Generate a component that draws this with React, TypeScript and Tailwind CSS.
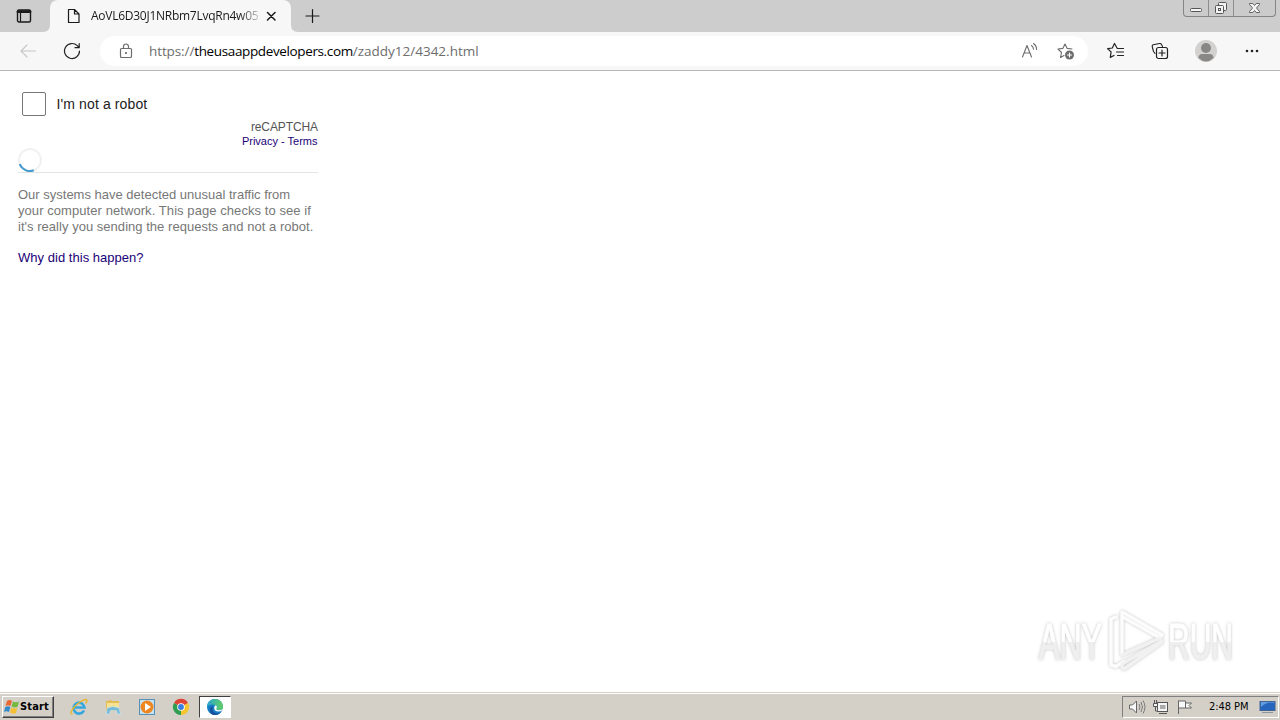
import type { ReactNode } from "react";

const Icon = ({ size = 20, className = "", children }: { size?: number; className?: string; children: ReactNode }) => (
  <svg
    width={size}
    height={size}
    viewBox={`0 0 ${size} ${size}`}
    fill="none"
    stroke="currentColor"
    strokeWidth="1.2"
    strokeLinecap="round"
    strokeLinejoin="round"
    className={`block shrink-0 ${className}`}
  >
    {children}
  </svg>
);

const WindowControls = () => (
  <div className="absolute right-[4px] top-0 flex h-[17px] w-[93px] rounded-b-[4px] border border-t-0 border-[#858585] bg-[#cbcbcb] text-[#555]">
    <div className="w-[25px] border-r border-[#8d8d8d]">
      <svg width="24" height="16" className="block">
        <rect x="6.5" y="8.5" width="11" height="3" rx="1" fill="#f5f5f5" stroke="currentColor" />
      </svg>
    </div>
    <div className="w-[25px] border-r border-[#8d8d8d]">
      <svg width="24" height="16" className="block" fill="#f2f2f2" stroke="currentColor">
        <rect x="9.5" y="2.5" width="8" height="8" rx="1" />
        <rect x="6.5" y="5.5" width="8" height="8" rx="1" />
        <rect x="9.5" y="8.5" width="2" height="2" />
      </svg>
    </div>
    <div className="flex-1">
      <svg width="41" height="16" className="block" fill="#f2f2f2" stroke="currentColor" strokeWidth="0.9">
        <path d="M15.5 3.5h3.3l1.7 2 1.7-2h3.3v1l-3 3.5 3 3.5v1h-3.3l-1.7-2-1.7 2h-3.3v-1l3-3.5-3-3.5z" />
      </svg>
    </div>
  </div>
);

const TabStrip = () => (
  <div className="relative flex h-8 bg-[#cdcdcd] text-[#1a1a1a]">
    <div className="flex w-[50px] items-center pl-[16px]">
      <Icon size={16}>
        <rect x="1.5" y="2" width="13" height="12" rx="1.5" strokeWidth="1.4" />
        <path d="M2 3.7h12" strokeWidth="2.8" />
        <path d="M4.5 5v8.5" />
      </Icon>
    </div>
    <div className="relative flex w-[241px] items-center rounded-t-[8px] bg-[#f7f7f7] pl-[16px]">
      <svg width="7" height="7" className="absolute -left-[7px] bottom-0">
        <path d="M7 0v7H0Q7 7 7 0" fill="#f7f7f7" />
      </svg>
      <svg width="7" height="7" className="absolute -right-[7px] bottom-0">
        <path d="M0 0v7h7Q0 7 0 0" fill="#f7f7f7" />
      </svg>
      <Icon size={16}>
        <path d="M2.5 1.5h6l4.5 4.5v8.5h-10.500zM8.5 1.5v4.5h4.5" />
      </Icon>
      <div className="ml-[9px] w-[168px] whitespace-nowrap bg-gradient-to-r from-[#1a1a1a] from-88% to-[#d0d0d0] bg-clip-text font-['Open_Sans',sans-serif] text-[12px] leading-4 tracking-[-0.26px] text-transparent">
        AoVL6D30J1NRbm7LvqRn4w05
      </div>
      <Icon size={10} className="ml-[7px]">
        <path d="M1.5 1.5l7.5 7.5M9 1.5L1.5 9" strokeWidth="1.5" />
      </Icon>
    </div>
    <div className="flex items-center pl-[13px]">
      <Icon size={16}>
        <path d="M8.5 1.5v13M2 8h13" />
      </Icon>
    </div>
    <WindowControls />
  </div>
);

const Toolbar = () => (
  <div className="flex h-[39px] items-center border-b border-[#b6b6b6] bg-[#f7f7f7] text-[#222]">
    <Icon size={18} className="ml-[19px] text-[#c6c6c6]">
      <path d="M16.5 9H2M8 3L2 9l6 6" strokeWidth="1.1" />
    </Icon>
    <Icon size={18} className="ml-[26px]">
      <path d="M16.5 9a7.5 7.5 0 1 1-2.2-5.3L16 5.5M16.2 1.5v4.2h-4.2" />
    </Icon>
    <div className="ml-[19px] flex h-[30px] w-[988px] items-center rounded-full bg-white pl-[18px] text-[#6d6d6d]">
      <Icon size={16}>
        <rect x="2.5" y="5.5" width="11" height="9" rx="1" />
        <path d="M5.5 5.5V3.5a2.5 2.5 0 0 1 5 0v2" />
        <circle cx="8" cy="10" r=".5" fill="currentColor" />
      </Icon>
      <div className="ml-[15px] w-[872px] whitespace-nowrap font-['Open_Sans',sans-serif] text-[13.5px] leading-5 tracking-[-0.1px]">
        https://
        <span className="tracking-[-0.37px] text-black">theusaappdevelopers.com</span>
        <span className="tracking-[0px]">/zaddy12/4342.html</span>
      </div>
      <Icon size={18}>
        <path d="M1.5 15L6 3.5 10.5 15M3.2 11h5.8M10.5 3.5q2 1.5 2 3.8M12.5 1.5q3.2 2.3 3 6" strokeWidth="1.1" />
      </Icon>
      <Icon size={19} className="ml-[18px]">
        <path d="M7 13.5L3.5 15.5l1-5L1 7l4.800-.6L8 2l2.200 4.400L15 7" strokeWidth="1.1" />
        <circle cx="12.5" cy="13" r="4.5" fill="currentColor" stroke="none" />
        <path d="M10.5 13h4M12.5 11v4" stroke="white" strokeWidth="1.1" />
      </Icon>
    </div>
    <Icon size={18} className="ml-[19px]">
      <path d="M10 6L7.5 1.5 5.3 6l-4.600.7 3.400 3.200-.8 5.500L7 13.5M10.5 6.5h6M9.5 10h7M10.5 13.5h6" />
    </Icon>
    <Icon size={18} className="ml-[26px]">
      <path d="M4 11.5L2.5 9.5 1.2 4.5Q1 3.2 2.2 2.8L8.5 1.5q1.5-.3 2 1l1 2" strokeWidth="1.1" />
      <rect x="5.5" y="5.5" width="11" height="11" rx="2" />
      <path d="M8 11h6M11 8v6" />
    </Icon>
    <svg width="22" height="22" viewBox="0 0 22 22" className="ml-[26px] block">
      <circle cx="11" cy="11" r="11" fill="#d3d1cf" />
      <circle cx="11" cy="8" r="5" fill="#898785" />
      <path d="M3.5 18q0-4 4-4h7q4 0 4 4-7.500 7-15 0" fill="#898785" />
    </svg>
    <svg width="16" height="16" className="ml-[27px] block" fill="#222">
      <circle cx="3" cy="8" r="1.3" />
      <circle cx="8" cy="8" r="1.3" />
      <circle cx="13" cy="8" r="1.3" />
    </svg>
  </div>
);

const Captcha = () => (
  <main className="flex-1 bg-white pl-[18px] pt-[21px] font-['Liberation_Sans',Arial,sans-serif]">
    <div className="w-[300px]">
      <div className="flex h-6 items-center pl-[4px]">
        <div className="h-6 w-6 rounded-[2px] border border-[#777]" />
        <span className="ml-[10.5px] whitespace-nowrap text-[14px] tracking-[0.12px] text-[#222]">I'm not a robot</span>
      </div>
      <div className="mt-[4px] text-right text-[12px] leading-[14px] tracking-[-0.1px] text-[#555]">reCAPTCHA</div>
      <div className="pr-[0.5px] text-right text-[11px] leading-[14px] text-[#1a0078]">Privacy - Terms</div>
      <div className="h-[25px] border-b border-[#e4e4e4]">
        <svg width="24" height="24" className="block" fill="none" strokeWidth="2">
          <circle cx="12" cy="12" r="11" stroke="#f1f1f1" />
          <path d="M1.7 16.2A11 11 0 0 0 15.8 22.3" stroke="#459bd0" />
        </svg>
      </div>
      <p className="mt-[14px] whitespace-nowrap text-[13px] leading-4 tracking-[0.03px] text-[#777]">
        <span className="tracking-[0px]">Our systems have detected unusual traffic from</span>
        <br />
        <span className="tracking-[0.07px]">your computer network. This page checks to see if</span>
        <br />
        it's really you sending the requests and not a robot.
      </p>
      <div className="mt-[15px] text-[13px] leading-4 tracking-[0.03px] text-[#1a0078]">Why did this happen?</div>
    </div>
  </main>
);

const Watermark = () => (
  <svg width="220" height="80" viewBox="1030 600 220 80" className="absolute bottom-[40px] left-[1030px] overflow-visible">
    <defs>
      <filter id="soft" x="-10%" y="-15%" width="120%" height="130%">
        <feDropShadow dx="0" dy="0" stdDeviation="1.8" floodColor="#888" floodOpacity="0.55" />
      </filter>
      <linearGradient id="fade" x1="0" y1="622" x2="0" y2="661" gradientUnits="userSpaceOnUse">
        <stop offset="0.5" stopColor="#ffffff" />
        <stop offset="0.5" stopColor="#efefef" />
      </linearGradient>
    </defs>
    <g filter="url(#soft)">
      <g fill="url(#fade)" stroke="url(#fade)" fontFamily="Liberation Sans Narrow, Liberation Sans, sans-serif" fontSize="50">
        <text x="1039" y="659" textLength="63" lengthAdjust="spacingAndGlyphs">ANY</text>
        <text x="1168" y="659" textLength="65" lengthAdjust="spacingAndGlyphs">RUN</text>
      </g>
      <g fill="none" stroke="#fcfcfc" strokeWidth="3.5" strokeLinejoin="round" strokeLinecap="round">
        <path d="M1116 617l-5 2v46l5 1.500 8-5" />
        <path d="M1122 654v-42l40 23-2 3-37-21" />
        <path d="M1122 655l38-17 2 4-38 27-2-2v-3l38-22" stroke="#f1f1f1" />
      </g>
    </g>
  </svg>
);

const IeIcon = () => (
  <svg width="18" height="18" viewBox="0 0 18 18" fill="none">
    <path d="M14 12.5a5.5 5.5 0 1 1 .5-3H5" stroke="#37a8de" strokeWidth="2.6" />
    <path d="M2.5 15.5C-1 17 2 10 8 5.5c5-4 9-5 9-3 0 1-.5 2-1.500 3" stroke="#e8b72c" strokeWidth="1.4" />
  </svg>
);

const FolderIcon = () => (
  <svg width="18" height="18" viewBox="0 0 18 18">
    <path d="M2 3l5-1 1 1h7v10H2z" fill="#e4bd55" />
    <path d="M3 5h12v5H3z" fill="#f7e294" />
    <path d="M3 10q6-3 12 0l1.500 6h-3l-1-3.500h-6L5.5 16h-3z" fill="#76b9d9" stroke="#d9f0f9" strokeWidth=".5" />
  </svg>
);

const PlayerIcon = () => (
  <svg width="18" height="18" viewBox="0 0 18 18">
    <rect x="1.5" y="1.5" width="15" height="15" fill="#c6e1f2" stroke="#5790b8" />
    <circle cx="9" cy="9" r="6.5" fill="#ee8622" />
    <path d="M7 5l6 4-6 4z" fill="white" />
  </svg>
);

const ChromeIcon = () => (
  <svg width="18" height="18" viewBox="0 0 18 18">
    <path d="M9 9L2 5a8 8 0 0 1 14 0z" fill="#df4537" />
    <path d="M9 9l7-4a8 8 0 0 1-7 12z" fill="#f5c52f" />
    <path d="M9 9v8A8 8 0 0 1 2 5z" fill="#2f9e50" />
    <circle cx="9" cy="9" r="3.8" fill="white" />
    <circle cx="9" cy="9" r="2.9" fill="#397de0" />
  </svg>
);

const EdgeIcon = () => (
  <svg width="18" height="18" viewBox="0 0 18 18">
    <defs>
      <linearGradient id="edge" x1="0" y1="0" x2="1" y2="0">
        <stop stopColor="#2aa5d2" />
        <stop offset="1" stopColor="#62cf60" />
      </linearGradient>
    </defs>
    <circle cx="9" cy="9" r="8" fill="#157bc5" />
    <path d="M1 9a8 8 0 0 1 16 0q0 3-3 3h-3q-1 0-1-1 1-4-3-4.500Q3 6 1 9" fill="url(#edge)" />
    <path d="M7 8q-2 5 2 7 4 1 6-1-2 3-6 3-5 0-5-5 0-3 3-4" fill="#174f9b" />
    <path d="M8.5 8Q7 13 12 13.5q3 0 4.500-1.500l1.500 2v-3l-2 .5q-2 1-5 .5-1-.5-.5-1.500 1-2-.5-3z" fill="white" />
  </svg>
);

const Taskbar = () => (
  <footer className="flex h-[28px] items-center border-t border-[#d4d0c8] bg-[#d4d0c8] pl-[2px] pt-px font-['DejaVu_Sans_Condensed','DejaVu_Sans',sans-serif] text-[11px] text-black shadow-[inset_0_1px_#fff]">
    <div className="flex h-[22px] w-[52px] items-center border border-b-[#404040] border-l-white border-r-[#404040] border-t-white pl-px shadow-[inset_-1px_-1px_#808080]">
      <svg width="16" height="16" viewBox="0 0 16 16" className="shrink-0">
        <path d="M3 2q3-2 5 0L6.5 7Q4 5.5 1.5 7z" fill="#e96732" />
        <path d="M9 2.5q3 1.500 6 0L13.5 8Q10 9 7.5 7.5z" fill="#75b943" />
        <path d="M1.3 8q3-1.500 5 0L5 13q-2.500-1.500-5 0z" fill="#328ac9" />
        <path d="M7.3 8.5q3 1.500 6 .5L12 14q-3 1.500-6-.5z" fill="#f4bf35" />
      </svg>
      <span className="text-[11px] font-bold tracking-[0.15px]">Start</span>
    </div>
    <div className="ml-[16px] flex w-[120px] items-center gap-[16px]">
      <IeIcon />
      <FolderIcon />
      <PlayerIcon />
      <ChromeIcon />
    </div>
    <div className="ml-[9px] flex h-[22px] w-[32px] items-center justify-center border border-b-white border-l-[#404040] border-r-white border-t-[#404040] bg-white">
      <EdgeIcon />
    </div>
    <div className="ml-auto mr-[1px] flex h-[22px] w-[157px] items-center border border-b-white border-l-[#808080] border-r-white border-t-[#808080] pl-[5px]">
      <svg width="18" height="18" fill="#f8f8f8" stroke="#666">
        <path d="M1.5 7h3l4-4v12l-4-4h-3z" />
        <path d="M11 6q2 3 0 6M13 4q3 5 0 10M15 2.5q4 6.500 0 13" fill="none" strokeWidth=".8" />
      </svg>
      <svg width="18" height="18" className="ml-[6px]" fill="#f5f5f5" stroke="#555">
        <rect x="5.5" y="4.5" width="10" height="9" />
        <rect x="8" y="7" width="5.5" height="4" fill="#aaa" stroke="none" />
        <path d="M7 15.5h8M2.5 2v3M4.5 2v3M1.5 5.5h4v3h-4zM3.5 9v4h2" />
      </svg>
      <svg width="18" height="18" className="ml-[6px]" fill="#f8f8f8" stroke="#666">
        <path d="M2.5 16V2.5M2.5 3h7v7h-7zM9.5 5h6l-2.500 2.500 2.500 2.500h-6" />
      </svg>
      <span className="ml-[15px] w-[42px] whitespace-nowrap tracking-[-0.05px]">2:48 PM</span>
      <svg width="17" height="16" className="ml-[8px] shrink-0">
        <rect x="1" y="2.5" width="15" height="9" fill="#2665bd" stroke="#3e6396" />
        <path d="M2 8Q8 2 15 4v-1H2z" fill="#649cdd" />
        <path d="M3 13.5h11" stroke="#8b96a1" />
      </svg>
    </div>
  </footer>
);

const App = () => (
  <div className="relative flex h-[720px] w-[1280px] flex-col overflow-hidden bg-white">
    <TabStrip />
    <Toolbar />
    <Captcha />
    <Watermark />
    <Taskbar />
  </div>
);

export default App;
